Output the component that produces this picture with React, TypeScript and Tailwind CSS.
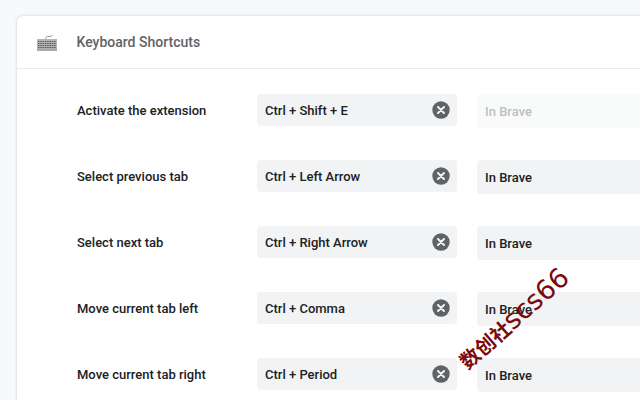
import React from 'react';

const rows = [
  { label: 'Activate the extension', keys: 'Ctrl + Shift + E', disabled: true },
  { label: 'Select previous tab', keys: 'Ctrl + Left Arrow', disabled: false },
  { label: 'Select next tab', keys: 'Ctrl + Right Arrow', disabled: false },
  { label: 'Move current tab left', keys: 'Ctrl + Comma', disabled: false },
  { label: 'Move current tab right', keys: 'Ctrl + Period', disabled: false },
];

const KeyboardIcon = () => (
  <svg width="20" height="18" viewBox="0 0 20 18" className="block">
    <path d="M9 7 V4.5 Q9 3.5 10.5 3.5 H13 Q15 3.5 15 2" fill="none" stroke="#9a9da1" strokeWidth="1" />
    <rect x="0" y="6" width="20" height="12" fill="#b4b6b9" />
    <path d="M1 8.5 H19 M1 10.5 H19 M1 12.5 H19 M1 14.5 H19" stroke="#4f5357" strokeWidth="1" strokeDasharray="1.5 0.8" />
    <rect x="0" y="15.5" width="20" height="2.5" fill="#a8abae" />
  </svg>
);

const ClearIcon = () => (
  <svg width="18" height="18" viewBox="0 0 18 18" className="block">
    <circle cx="9" cy="9" r="8.7" fill="#5f6368" />
    <path d="M6 6 L12 12 M12 6 L6 12" stroke="#f1f3f4" strokeWidth="2" strokeLinecap="round" />
  </svg>
);

const App: React.FC = () => {
  return (
    <div className="relative w-[640px] h-[400px] overflow-hidden bg-[#f8f9fa] pt-4 pl-[17px] font-['Roboto',sans-serif]">
      <div className="w-[700px] h-[500px] bg-white rounded-tl-[6px] shadow-[0_0_3px_rgba(60,64,67,0.25)]">
        {/* header */}
        <div className="flex items-center h-[53px] border-b border-[#e8eaed]">
          <div className="w-[59.5px] shrink-0 pl-5">
            <KeyboardIcon />
          </div>
          <span className="text-[14px] font-medium text-[#5f6368]">Keyboard Shortcuts</span>
        </div>

        {/* rows */}
        <div className="flex flex-col gap-8 pt-[25px] pl-[60px]">
          {rows.map((row) => (
            <div key={row.label} className="flex items-start h-[34px]">
              <div className="w-[180px] shrink-0 h-8 pt-px flex items-center text-[13px] font-medium text-[#202124]">{row.label}</div>
              <div className="w-[200px] shrink-0 h-8 flex items-center justify-between pl-2 pr-[7px] bg-[#f1f3f4] rounded text-[13px] font-medium text-[#202124]">
                <span className="pt-px">{row.keys}</span>
                <ClearIcon />
              </div>
              <div
                className={
                  row.disabled
                    ? 'ml-5 w-[300px] shrink-0 h-[34px] pt-px flex items-center pl-2 bg-[#f9fafa] rounded text-[13px] font-medium text-[#bdbfc1]'
                    : 'ml-5 w-[300px] shrink-0 h-[34px] pt-px flex items-center pl-2 bg-[#f1f3f4] rounded text-[13px] font-medium text-[#202124]'
                }
              >
                In Brave
              </div>
            </div>
          ))}
        </div>
      </div>

      {/* watermark */}
      <div className="absolute left-[446px] top-[304px] -rotate-[41deg] whitespace-nowrap leading-[28px] text-[#7c0a0a]">
        <span className="text-[20px] font-bold font-['Noto_Sans_CJK_SC',sans-serif]">数创社</span>
        <span className="text-[27px] font-['DejaVu_Sans',sans-serif]">scs66</span>
      </div>
    </div>
  );
};

export default App;
